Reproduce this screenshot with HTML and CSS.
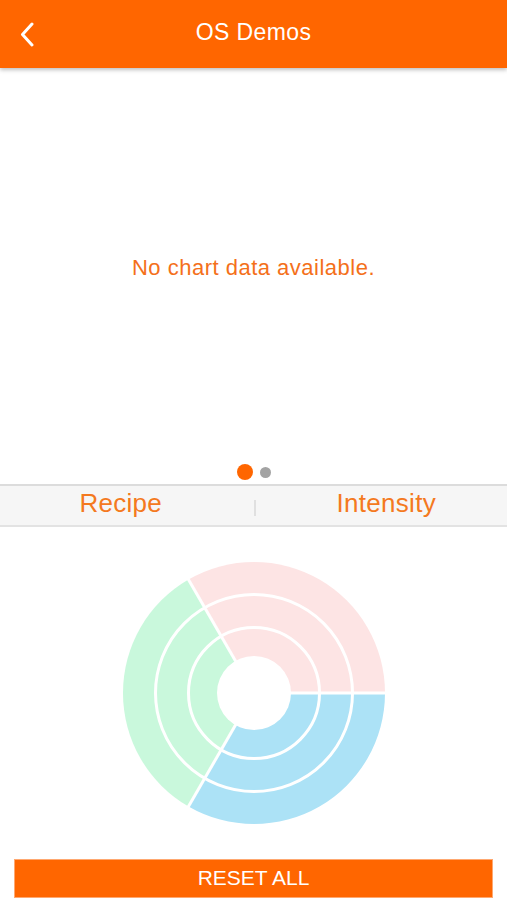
FILE: index.html
```html
<!DOCTYPE html>
<html lang="en">
  <head>
    <meta charset="UTF-8" />
    <meta name="viewport" content="width=device-width, initial-scale=1.0" />
    <title>OS Demos</title>
    <link rel="stylesheet" href="styles.css">
  </head>
  <body>
    <header class="topbar">
      <button class="back" aria-label="Back">
        <svg width="16" height="26" viewBox="0 0 16 26">
          <path d="M12 2 L2.5 12.5 L12 23" fill="none" stroke="#fff" stroke-width="3" stroke-linecap="round" stroke-linejoin="round" />
        </svg>
      </button>
      <h1 class="title">OS Demos</h1>
    </header>
    <main>
      <section class="chart">
        <p class="empty">No chart data available.</p>
      </section>
      <div class="pager">
        <span class="dot active"></span>
        <span class="dot"></span>
      </div>
      <nav class="segments">
        <a class="seg left">Recipe</a>
        <span class="divider"></span>
        <a class="seg right">Intensity</a>
      </nav>
      <section class="sunburst">
        <svg width="266" height="266" viewBox="-133 -133 266 266">
          <path d="M0 0 L131 0 A131 131 0 0 0 -65.5 -113.45 Z" fill="#fde4e4" />
          <path d="M0 0 L-65.5 -113.45 A131 131 0 0 0 -65.5 113.45 Z" fill="#c9f8dc" />
          <path d="M0 0 L-65.5 113.45 A131 131 0 0 0 131 0 Z" fill="#ace2f6" />
          <circle r="37" fill="#fff" />
          <circle r="65.5" fill="none" stroke="#fff" stroke-width="3" />
          <circle r="98.5" fill="none" stroke="#fff" stroke-width="3" />
          <g stroke="#fff" stroke-width="3">
            <line x1="0" y1="0" x2="134" y2="0" />
            <line x1="0" y1="0" x2="-67" y2="-116" />
            <line x1="0" y1="0" x2="-67" y2="116" />
          </g>
        </svg>
      </section>
      <div class="actions">
        <button class="reset">RESET ALL</button>
      </div>
    </main>
  </body>
</html>
```

FILE: styles.css
```css
* {
  box-sizing: border-box;
}
body {
  margin: 0;
  padding: 0;
  background-color: #fff;
  font-family: "Liberation Sans", Arial, sans-serif;
  width: 507px;
  overflow: hidden;
}
.topbar {
  --orange: #ff6600;
  position: relative;
  z-index: 2;
  height: 68px;
  background-color: var(--orange);
  display: flex;
  align-items: center;
  justify-content: center;
  box-shadow: 0 2px 4px rgba(0, 0, 0, 0.25);
}
.back {
  position: absolute;
  left: 20px;
  top: 22px;
  padding: 0;
  border: 0;
  background: none;
  display: flex;
}
.title {
  margin: 0;
  color: #fff;
  font-size: 23px;
  letter-spacing: 0.4px;
  font-weight: normal;
  padding-bottom: 4px;
}
main {
  display: flex;
  flex-direction: column;
}
.chart {
  height: 396px;
  display: flex;
  align-items: center;
  justify-content: center;
}
.empty {
  margin: 0;
  padding-top: 3px;
  color: #f4701a;
  font-size: 22px;
  letter-spacing: 0.5px;
}
.pager {
  height: 20px;
  display: flex;
  justify-content: center;
  align-items: center;
  gap: 7px;
  padding-bottom: 4px;
  padding-left: 1px;
}
.dot {
  width: 11px;
  height: 11px;
  border-radius: 50%;
  background-color: #a3a3a3;
}
.dot.active {
  width: 16px;
  height: 16px;
  background-color: #ff6600;
}
.segments {
  height: 43px;
  display: flex;
  align-items: center;
  background-color: #f6f6f6;
  border-top: 2px solid #dcdcdc;
  border-bottom: 2px solid #e3e3e3;
}
.seg {
  flex: 1;
  text-align: center;
  color: #f47920;
  font-size: 26px;
  letter-spacing: 0.3px;
  padding-bottom: 5px;
}
.seg.left {
  padding-right: 12px;
}
.seg.right {
  padding-left: 10px;
}
.divider {
  width: 2px;
  height: 16px;
  margin-top: 4px;
  background-color: #e0e0e0;
}
.sunburst {
  height: 332px;
  display: flex;
  align-items: center;
  justify-content: center;
  padding-left: 1px;
}
.actions {
  display: flex;
  padding: 0 14px;
}
.reset {
  flex: 1;
  height: 39px;
  border: 1px solid #ffa870;
  background-color: #ff6600;
  color: #fff;
  font-family: "Liberation Sans", Arial, sans-serif;
  font-size: 21px;
  padding: 0 0 2px;
}
```
